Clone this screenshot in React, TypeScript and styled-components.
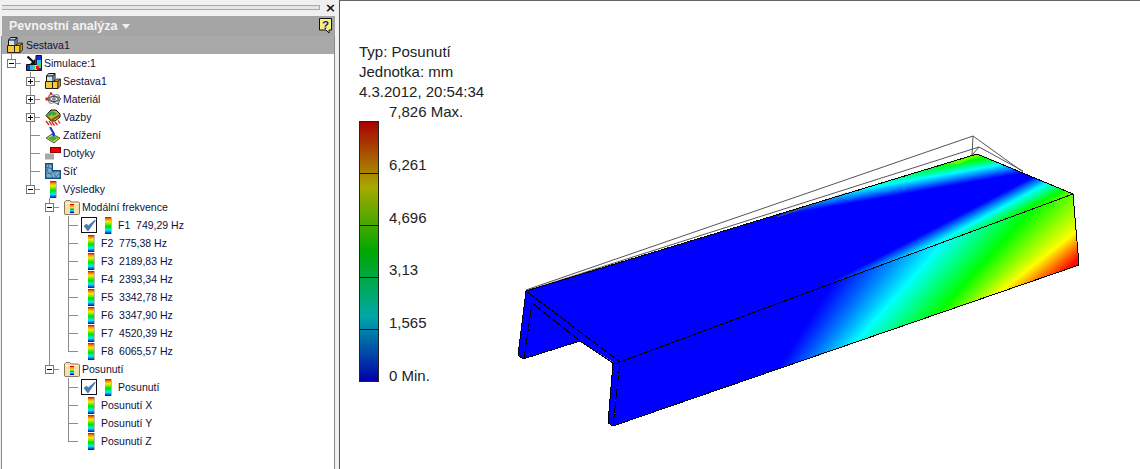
import React from "react";
import styled, { createGlobalStyle } from "styled-components";

const Global = createGlobalStyle`
  html, body { margin: 0; padding: 0; background: #fff; }
  #root { width: 1140px; height: 469px; overflow: hidden; }
`;

const Page = styled.div`
  display: flex; width: 1140px; height: 469px; overflow: hidden;
  font-family: "Liberation Sans", Arial, sans-serif;
`;
const Panel = styled.aside`
  width: 339px; flex: none; display: flex; flex-direction: column;
  background: #f0f0f0; padding: 0 4px 0 1px; box-sizing: border-box;
`;
const GripBar = styled.div`
  height: 16px; flex: none; display: flex; align-items: center; gap: 5px; padding: 0 0 0 1px; margin-right: -1px;
`;
const Grip = styled.div`
  flex: 1; height: 3px; margin-top: -1px; border-top: 1px solid #a8a8a8; border-bottom: 1px solid #a8a8a8;
  border-right: 1px solid #a8a8a8; background: #e4e4e4;
`;
const Close = styled.span`
  width: 11px; font: bold 13px/14px "DejaVu Sans", sans-serif; color: #111; text-align: center; margin-top: -1px;
`;
const TitleBar = styled.header`
  height: 20px; flex: none; display: flex; align-items: center; background: #a5a5a5;
  padding: 0 3px 0 7px; margin-left: 1px;
`;
const Title = styled.span`
  font-size: 12.5px; font-weight: 700; color: #f2f2f2;
`;
const Caret = styled.span`
  width: 0; height: 0; margin: 1px 0 0 5px; border: 4px solid transparent; border-top: 5px solid #f2f2f2; border-bottom: 0;
`;
const HelpSlot = styled.span`
  margin-left: auto; height: 20px; display: flex; align-items: center;
`;
const Tree = styled.div`
  flex: 1; background: #fff; border-left: 1px solid #8a8a8a; border-right: 1px solid #8a8a8a;
`;
const Row = styled.div<{ $selected?: boolean }>`
  height: 18px; display: flex; align-items: center; background: ${p => (p.$selected ? "#a9a9a9" : "transparent")};
  font-size: 10.5px; color: #10103a; white-space: pre;
`;
const GUIDE = "#8c8c8c";
type CellKind = "blank" | "line" | "tee" | "corner" | "plus" | "minus" | "minusEnd";
const Cell = styled.span<{ $kind: CellKind }>`
  width: 19px; height: 18px; flex: none; position: relative;
  background-repeat: no-repeat;
  background-image: ${p => {
    const v = `linear-gradient(${GUIDE}, ${GUIDE})`;
    if (p.$kind === "blank") return "none";
    if (p.$kind === "line") return v;
    return `${v}, ${v}`;
  }};
  background-size: ${p => {
    if (p.$kind === "line") return "1px 18px";
    if (p.$kind === "corner" || p.$kind === "minusEnd") return "1px 10px, 13px 1px";
    if (p.$kind === "minus") return "1px 5px, 13px 1px";
    return "1px 18px, 13px 1px";
  }};
  background-position: ${p => (p.$kind === "line" ? "9px 0" : "9px 0, 9px 9px")};
`;
const Box = styled.span`
  position: absolute; left: 5px; top: 5px; width: 7px; height: 7px; border: 1px solid #777; background: #fff;
  display: block;
`;
const BoxH = styled.span`
  position: absolute; left: 1px; top: 3px; width: 5px; height: 1px; background: #000;
`;
const BoxV = styled.span`
  position: absolute; left: 3px; top: 1px; width: 1px; height: 5px; background: #000;
`;
const IconSlot = styled.span<{ $gap?: number }>`
  width: 16px; height: 18px; flex: none; display: flex; align-items: center; justify-content: center;
  margin-left: ${p => p.$gap ?? 5}px; margin-right: 2px;
`;
const Bar = styled.span`
  display: block; width: 6px; height: 17px; box-shadow: 1px 0 0 #bbb;
  background: linear-gradient(#e00000 0, #f5a000 15%, #f0f000 28%, #00e000 55%, #00f0f0 78%, #0000d0 100%);
`;
const Label = styled.span<{ $gap?: number }>`
  margin-left: ${p => p.$gap ?? 0}px;
`;
const Checkbox = styled.span`
  width: 14px; height: 14px; flex: none; border: 1px solid #111; margin-left: 3px; background: #fff;
  display: flex; align-items: center; justify-content: center;
`;
const Viewport = styled.main`
  flex: 1; position: relative; background: #fff; border-left: 1px solid #555; border-top: 1px solid #666;
  padding: 41px 0 0 19px; box-sizing: border-box;
`;
const Model = styled.svg`
  position: absolute; left: 0; top: -1px;
`;
const Legend = styled.section`
  position: relative; color: #222; font-size: 15px; line-height: 20px; width: 150px;
`;
const Scale = styled.div`
  display: flex;
`;
const ColorBar = styled.div`
  width: 20px; height: 261px; margin-top: 19px; flex: none; display: flex; flex-direction: column;
  border: 1px solid #222; box-sizing: border-box;
  background: linear-gradient(#a80000, #a8a800 25%, #00a800 50%, #00a8a8 75%, #0000a8);
`;
const Band = styled.div`
  flex: 1; border-bottom: 1px solid #111;
  &:last-child { border-bottom: 0; }
`;
const Values = styled.div`
  height: 284px; margin-left: 10px; display: flex; flex-direction: column; justify-content: space-between;
`;

const ramp = (t: number) => {
  const s: [number, number, number][] = [[0, 0, 255], [0, 255, 255], [0, 255, 0], [255, 255, 0], [255, 0, 0]];
  const x = Math.min(0.9999, Math.max(0, t)) * 4;
  const i = Math.floor(x), f = x - i;
  const c = s[i].map((v, k) => Math.round(v + (s[i + 1][k] - v) * f));
  return `rgb(${c[0]},${c[1]},${c[2]})`;
};
type Iso = [number, number, number, number, number];
const bands = (lines: Iso[], far: string) => {
  const out: React.ReactElement[] = [];
  lines.slice(0, -1).forEach((l, i) => {
    const m = lines[i + 1];
    const steps = 26;
    for (let k = 0; k < steps; k++) {
      const f = k / steps;
      const mix = (j: number) => l[j] + (m[j] - l[j]) * f;
      const [ax, ay, bx, by, t] = [mix(0), mix(1), mix(2), mix(3), mix(4)];
      const ex = 0.4;
      const a = `${(ax - (bx - ax) * ex).toFixed(1)},${(ay - (by - ay) * ex).toFixed(1)}`;
      const b = `${(bx + (bx - ax) * ex).toFixed(1)},${(by + (by - ay) * ex).toFixed(1)}`;
      out.push(<polygon key={`${i}-${k}`} points={`${a} ${b} ${far}`} fill={ramp(t)} />);
    }
  });
  return out;
};
const SIDE: Iso[] = [
  [777, 368, 833, 280, 0],
  [858, 338, 947, 237, 0.25],
  [940, 310, 1030, 210, 0.5],
  [1003, 289, 1076, 231, 0.75],
  [1070, 268, 1082, 255, 1],
];
const TOP_BACK: Iso[] = [
  [775, 217, 1030, 172, 0],
  [845, 192, 1005, 164, 0.25],
  [950, 163, 992, 158, 0.5],
  [968, 160, 990, 150, 0.6],
];
const TOP_FRONT: Iso[] = [
  [840, 277, 1030, 178, 0],
  [947, 237, 1043, 185, 0.25],
  [1030, 207, 1065, 189, 0.5],
  [1060, 205, 1085, 185, 0.62],
];
const FAR_LOWER = "1300,100 1300,500 700,600";

const Assembly = () => (
  <svg width="16" height="16" viewBox="0 0 16 16">
    <path d="M1.500 3 3.500.5h6.500V7L8 9.500H1.500z" fill="#b4cce6" stroke="#111" />
    <path d="M2 3.500h5.500V9H2z" fill="#d4e2f2" />
    <path d="M1.500 3H8v6.500M8 3 10 .5" fill="none" stroke="#111" />
    <path d="M8.500 3.500 9.500 2v5l-1 1.500z" fill="#5a80a8" />
    <path d="M.5 8.500h7v7h-7z" fill="#f8cc30" stroke="#222" />
    <path d="M7.500 8.500h5.500v7H7.500z" fill="#f8cc30" stroke="#222" />
    <path d="M13 8.500 15.500 6v7L13 15.500zM9 8.500 11.500 6h4L13 8.500z" fill="#c8922a" stroke="#222" strokeWidth=".8" />
  </svg>
);
const Simulation = () => (
  <svg width="16" height="16" viewBox="0 0 16 16">
    <path d="M10 .5h5.500v15H.5V9.500H10z" fill="#1828d8" stroke="#111" />
    <path d="M11 5h4v4h-4z" fill="#28c8e8" />
    <path d="M11 8h4v5h-4z" fill="#40d860" />
    <path d="M1 10h3v5H1z" fill="#1438e8" />
    <path d="M4 10h3v5H4z" fill="#22c0e0" />
    <path d="M7 10h2v5H7z" fill="#50e050" />
    <path d="M9 10h2v5H9z" fill="#f0e020" />
    <path d="M10 11h3v3h-3z" fill="#e81818" />
    <path d="M1.500 1.500 8.500 8" stroke="#111" strokeWidth="2.200" fill="none" />
    <path d="M9.500 9V3.500L4 9z" fill="#111" />
  </svg>
);
const Material = () => (
  <svg width="16" height="14" viewBox="0 0 16 14">
    <ellipse cx="9" cy="7" rx="6" ry="3" fill="none" stroke="#555" transform="rotate(35 9 7)" />
    <ellipse cx="9" cy="7" rx="6" ry="3" fill="none" stroke="#777" transform="rotate(-35 9 7)" />
    <ellipse cx="9" cy="7" rx="6.500" ry="2.500" fill="none" stroke="#444" />
    <circle cx="9" cy="7" r="2" fill="#8a8a9a" />
    <circle cx="2" cy="7" r="1.800" fill="#e02020" />
    <circle cx="6" cy="1.500" r="1.300" fill="#e02020" />
    <circle cx="13" cy="12" r="1.100" fill="#3050c0" />
  </svg>
);
const Constraint = () => (
  <svg width="16" height="17" viewBox="0 0 16 17">
    <path d="M1 6.500 6 1h5l4 4v3l-5 4H6z" fill="#c8b428" stroke="#111" />
    <path d="M2 6l4-4 3 1-4 4zM6 3l4 0 2 2-4 2z" fill="#30a848" />
    <path d="M2 7l4 4.500 8-5" stroke="#6a5a10" strokeWidth="1.500" fill="none" />
    <path d="M1 12l3 4M4 12l3 4.500M7 13l2.500 3.500M10 13l2.500 3M13 11.500l2 3" stroke="#e02020" strokeWidth="1.300" />
  </svg>
);
const Load = () => (
  <svg width="16" height="17" viewBox="0 0 16 17">
    <path d="M1 11 7 7l8 4-6 5z" fill="#d8d030" stroke="#333" strokeWidth=".8" />
    <path d="M3 11l5 3 5-3-5-2z" fill="#30b050" />
    <path d="M5 0l4 7" stroke="#1830d0" strokeWidth="2" />
    <path d="M6 7l4-1-.5 4z" fill="#1830d0" />
  </svg>
);
const Contact = () => (
  <svg width="16" height="16" viewBox="0 0 16 16">
    <rect x="5.500" y="2.500" width="10" height="5" fill="#f00000" stroke="#8a0000" />
    <rect x="0" y="8.500" width="9" height="6" fill="#a8a8a8" />
  </svg>
);
const Mesh = () => (
  <svg width="16" height="16" viewBox="0 0 16 16">
    <path d="M.7.7h6.600v7h8v7.600H.7z" fill="#7cb0c8" stroke="#184c88" strokeWidth="1.400" />
    <path d="M1 4l6 2M4 1 2 8l4 3 2-3M1 10l5 1 2 4M8 8l3 6 4-4M11 8v2" stroke="#2a5a88" strokeWidth=".7" fill="none" />
  </svg>
);
const Folder = () => (
  <svg width="16" height="15" viewBox="0 0 16 15">
    <path d="M.5 14V2L2 .5h4L7 2h7.500L15.500 3v11l-1 .5H1z" fill="#f6dfb0" stroke="#8a7a5a" />
    <path d="M1 3.500h14" stroke="#fff5dc" />
    {["#e00000", "#f0b000", "#e8e800", "#00d000", "#00e8e8", "#0000d0"].map((c, i) => (
      <rect key={c} x="6" y={4 + i * 1.500} width="4" height="1.500" fill={c} />
    ))}
  </svg>
);
const Tick = () => (
  <svg width="13" height="13" viewBox="0 0 13 13">
    <path d="M1.500 7 5 11.500 12 1.500 5 7.500 3.500 5.500z" fill="#4a7cb0" stroke="#4a7cb0" strokeWidth="1.300" strokeLinejoin="round" />
  </svg>
);
const Help = () => (
  <svg width="13" height="16" viewBox="0 0 13 16">
    <path d="M.5.5h12v11.500h-2.500v3l-3-3H.5z" fill="#fbf27a" stroke="#111" />
    <text x="6.500" y="10.500" textAnchor="middle" fontFamily="Liberation Sans, sans-serif" fontWeight="700" fontSize="11.500" fill="#1a1a90">?</text>
  </svg>
);

const Exp = ({ kind }: { kind: CellKind }) => (
  <Cell $kind={kind}>
    {(kind === "plus" || kind === "minus" || kind === "minusEnd") && (
      <Box>
        <BoxH />
        {kind === "plus" && <BoxV />}
      </Box>
    )}
  </Cell>
);
const Cells = ({ k }: { k: CellKind[] }) => <>{k.map((c, i) => <Exp key={i} kind={c} />)}</>;

type Item = { cells: CellKind[]; icon: React.ReactNode; text: string; check?: boolean };
const L1: CellKind[] = ["blank"];
const bar = <Bar />;
const freqs = ["F1  749,29 Hz", "F2  775,38 Hz", "F3  2189,83 Hz", "F4  2393,34 Hz", "F5  3342,78 Hz", "F6  3347,90 Hz", "F7  4520,39 Hz", "F8  6065,57 Hz"];
const items: Item[] = [
  { cells: ["minusEnd"], icon: <Simulation />, text: "Simulace:1" },
  { cells: [...L1, "plus"], icon: <Assembly />, text: "Sestava1" },
  { cells: [...L1, "plus"], icon: <Material />, text: "Materiál" },
  { cells: [...L1, "plus"], icon: <Constraint />, text: "Vazby" },
  { cells: [...L1, "tee"], icon: <Load />, text: "Zatížení" },
  { cells: [...L1, "tee"], icon: <Contact />, text: "Dotyky" },
  { cells: [...L1, "tee"], icon: <Mesh />, text: "Síť" },
  { cells: [...L1, "minusEnd"], icon: bar, text: "Výsledky" },
  { cells: ["blank", "blank", "plus"], icon: <Folder />, text: "Modální frekvence" },
  ...freqs.map((text, i): Item => ({
    cells: ["blank", "blank", "line", i === 7 ? "corner" : "tee"],
    icon: bar, text, check: i === 0,
  })),
  { cells: ["blank", "blank", "minusEnd"], icon: <Folder />, text: "Posunutí" },
  { cells: ["blank", "blank", "blank", "tee"], icon: bar, text: "Posunutí", check: true },
  { cells: ["blank", "blank", "blank", "tee"], icon: bar, text: "Posunutí X" },
  { cells: ["blank", "blank", "blank", "tee"], icon: bar, text: "Posunutí Y" },
  { cells: ["blank", "blank", "blank", "corner"], icon: bar, text: "Posunutí Z" },
];
items[8] = { ...items[8], cells: ["blank", "blank", "minus"] };

const legendLines = ["Typ: Posunutí", "Jednotka: mm", "4.3.2012, 20:54:34"];
const values = ["7,826 Max.", "6,261", "4,696", "3,13", "1,565", "0 Min."];

export default function App() {
  return (
    <Page>
      <Global />
      <Panel>
        <GripBar>
          <Grip />
          <Close>×</Close>
        </GripBar>
        <TitleBar>
          <Title>Pevnostní analýza</Title>
          <Caret />
          <HelpSlot><Help /></HelpSlot>
        </TitleBar>
        <Tree>
          <Row $selected>
            <IconSlot><Assembly /></IconSlot>
            <Label $gap={1}>Sestava1</Label>
          </Row>
          {items.map((it, i) => (
            <Row key={i}>
              <Cells k={it.cells} />
              {it.check ? (
                <>
                  <Checkbox><Tick /></Checkbox>
                  <IconSlot $gap={3}>{it.icon}</IconSlot>
                </>
              ) : (
                <IconSlot>{it.icon}</IconSlot>
              )}
              <Label>{it.text}</Label>
            </Row>
          ))}
        </Tree>
      </Panel>
      <Viewport>
        <Model width="800" height="469" viewBox="340 0 800 469">
          <defs>
            <clipPath id="sideFace"><polygon points="620,362 1073,194 1079,265 613,426" /></clipPath>
            <clipPath id="topFace"><polygon points="526,291 977,154 1073,194 620,362" /></clipPath>
          </defs>
          <g fill="none" stroke="#555" strokeWidth="1">
            <path d="M526 290 973 136 1023 172M973 136 972 155M526 291 979 147 1023 171M972 155 979 147" />
          </g>
          <polygon points="526,291 518,355 523,359 580,341 613,362 608,423 613,426 620,362" fill="#0000ff" />
          <polygon points="526,291 977,154 1073,194 620,362" fill="#0000ff" />
          <polygon points="620,362 1073,194 1079,265 613,426" fill="#0000ff" />
          <g clipPath="url(#topFace)">
            {bands(TOP_BACK, "1300,100 1300,0 600,0")}
            {bands(TOP_FRONT, FAR_LOWER)}
          </g>
          <g clipPath="url(#sideFace)">{bands(SIDE, FAR_LOWER)}</g>
          <path d="M777 217 847 193" stroke="#664" fill="none" strokeWidth=".8" />
          <g fill="none" stroke="#000" strokeWidth="1" shapeRendering="crispEdges">
            <path d="M526 291 977 154 1073 194 1079 265 613 426 608 423 613 363 580 341 523 359 518 355z" />
            <path d="M526 291 620 362 1073 194M613 363H620" />
            <path d="M620 362 613 426" strokeDasharray="12 1" />
            <path d="M532 303 580 341M532 303 524 359" strokeDasharray="12 1" />
          </g>
        </Model>
        <Legend>
          {legendLines.map(l => <div key={l}>{l}</div>)}
          <Scale>
            <ColorBar>{[0, 1, 2, 3, 4].map(i => <Band key={i} />)}</ColorBar>
            <Values>{values.map(v => <span key={v}>{v}</span>)}</Values>
          </Scale>
        </Legend>
      </Viewport>
    </Page>
  );
}
